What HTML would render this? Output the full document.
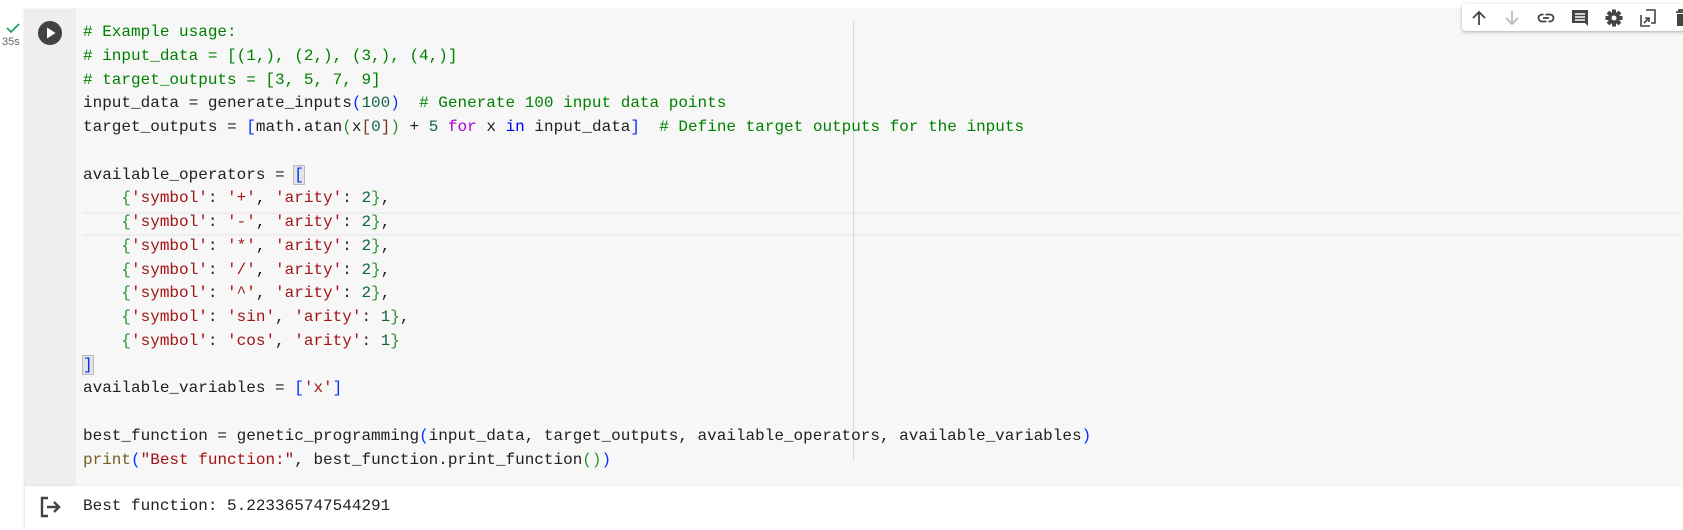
<!DOCTYPE html>
<html><head><meta charset="utf-8">
<style>
html,body{margin:0;padding:0;background:#fff;width:1683px;height:530px;overflow:hidden;position:relative;font-family:"Liberation Mono",monospace}
.cell{position:absolute;left:25px;top:9px;width:1658px;height:477px;background:#f7f7f7;box-shadow:-1px 0 2px rgba(0,0,0,.12)}
.gut{position:absolute;left:25px;top:9px;width:51px;height:477px;background:#eeeeee}
.out{position:absolute;left:25px;top:486px;width:1658px;height:44px;background:#fff;box-shadow:-1px 0 2px rgba(0,0,0,.1)}
pre{position:absolute;left:83px;top:21px;margin:0;font:16px/23.75px "Liberation Mono",monospace;color:#212121;white-space:pre}
.c{color:#008000}.n{color:#116644}.s{color:#a31515}.k{color:#af00db}.b{color:#0000ff}
.b1{color:#0431fa}.b2{color:#319331}.b3{color:#7b3814}.f{color:#795e26}
.hl{position:absolute;left:83px;top:212px;width:1600px;height:20px;border-top:2px solid #eeeeee;border-bottom:2px solid #eeeeee}
.ruler{position:absolute;left:853px;top:21px;width:1px;height:440px;background:#d8d8d8}
.mb{outline:1px solid #bbb;background:#e4e4e4}
.tb{position:absolute;left:1462px;top:4px;width:240px;height:27px;background:#fff;border-radius:3px;box-shadow:0 1px 3px rgba(0,0,0,.3)}
.tb svg{position:absolute;top:5px}
</style></head><body>
<div class="cell"></div><div class="gut"></div>
<div class="hl"></div>
<div class="ruler"></div>
<svg style="position:absolute;left:5px;top:22px" width="16" height="12" viewBox="0 0 16 12"><path d="M2 6 L6 10 L14 2" fill="none" stroke="#0f9d58" stroke-width="1.6"/></svg>
<div style="position:absolute;left:2px;top:36px;font:11px 'Liberation Sans',sans-serif;color:#666">35s</div>
<svg style="position:absolute;left:38px;top:21px" width="24" height="24" viewBox="0 0 24 24"><circle cx="12" cy="12" r="12" fill="#424242"/><path d="M9 6.5 L17.5 12 L9 17.5Z" fill="#fff"/></svg>
<pre><span class="c"># Example usage:</span>
<span class="c"># input_data = [(1,), (2,), (3,), (4,)]</span>
<span class="c"># target_outputs = [3, 5, 7, 9]</span>
input_data = generate_inputs<span class="b1">(</span><span class="n">100</span><span class="b1">)</span>  <span class="c"># Generate 100 input data points</span>
target_outputs = <span class="b1">[</span>math.atan<span class="b2">(</span>x<span class="b3">[</span><span class="n">0</span><span class="b3">]</span><span class="b2">)</span> + <span class="n">5</span> <span class="k">for</span> x <span class="b">in</span> input_data<span class="b1">]</span>  <span class="c"># Define target outputs for the inputs</span>

available_operators = <span class="b1 mb">[</span>
    <span class="b2">{</span><span class="s">'symbol'</span>: <span class="s">'+'</span>, <span class="s">'arity'</span>: <span class="n">2</span><span class="b2">}</span>,
    <span class="b2">{</span><span class="s">'symbol'</span>: <span class="s">'-'</span>, <span class="s">'arity'</span>: <span class="n">2</span><span class="b2">}</span>,
    <span class="b2">{</span><span class="s">'symbol'</span>: <span class="s">'*'</span>, <span class="s">'arity'</span>: <span class="n">2</span><span class="b2">}</span>,
    <span class="b2">{</span><span class="s">'symbol'</span>: <span class="s">'/'</span>, <span class="s">'arity'</span>: <span class="n">2</span><span class="b2">}</span>,
    <span class="b2">{</span><span class="s">'symbol'</span>: <span class="s">'^'</span>, <span class="s">'arity'</span>: <span class="n">2</span><span class="b2">}</span>,
    <span class="b2">{</span><span class="s">'symbol'</span>: <span class="s">'sin'</span>, <span class="s">'arity'</span>: <span class="n">1</span><span class="b2">}</span>,
    <span class="b2">{</span><span class="s">'symbol'</span>: <span class="s">'cos'</span>, <span class="s">'arity'</span>: <span class="n">1</span><span class="b2">}</span>
<span class="b1 mb">]</span>
available_variables = <span class="b1">[</span><span class="s">'x'</span><span class="b1">]</span>

best_function = genetic_programming<span class="b1">(</span>input_data, target_outputs, available_operators, available_variables<span class="b1">)</span>
<span class="f">print</span><span class="b1">(</span><span class="s">"Best function:"</span>, best_function.print_function<span class="b2">()</span><span class="b1">)</span></pre>
<div class="out"></div>
<svg style="position:absolute;left:39px;top:496px" width="24" height="22" viewBox="0 0 24 22"><path d="M8 2 H3 V20 H8 M8 2 H9 M8 20 H9" fill="none" stroke="#444" stroke-width="2.4"/><path d="M8 11 H20 M15 6 L20 11 L15 16" fill="none" stroke="#444" stroke-width="2.4"/></svg>
<div style="position:absolute;left:83px;top:495px;font:16px/23.75px 'Liberation Mono',monospace;color:#212121;white-space:pre">Best function: 5.223365747544291</div>
<div class="tb">
<svg style="left:8px" width="18" height="18" viewBox="0 0 18 18"><path d="M9 16 V3 M3 9 L9 3 L15 9" fill="none" stroke="#444" stroke-width="1.8"/></svg>
<svg style="left:41px" width="18" height="18" viewBox="0 0 18 18"><path d="M9 2 V15 M3 9 L9 15 L15 9" fill="none" stroke="#bbb" stroke-width="1.8"/></svg>
<svg style="left:75px" width="18" height="18" viewBox="0 0 18 18"><rect x="1.5" y="5.5" width="15" height="7" rx="3.5" fill="none" stroke="#444" stroke-width="1.8"/><path d="M6 9 H12" stroke="#444" stroke-width="1.8"/><path d="M7.5 4.5 V6.5 M10.5 11.5 V13.5" stroke="#fff" stroke-width="2"/></svg>
<svg style="left:109px" width="18" height="18" viewBox="0 0 18 18"><path d="M1 1 H17 V17 L14 14 H1Z" fill="#444"/><path d="M4 5 H14 M4 8 H14 M4 11 H14" stroke="#fff" stroke-width="1.5"/></svg>
<svg style="left:143px" width="18" height="18" viewBox="0 0 18 18"><g fill="#444"><circle cx="9" cy="9" r="6"/><rect x="7" y="0.5" width="4" height="17"/><rect x="0.5" y="7" width="17" height="4"/><rect x="7" y="0.5" width="4" height="17" transform="rotate(45 9 9)"/><rect x="7" y="0.5" width="4" height="17" transform="rotate(-45 9 9)"/></g><circle cx="9" cy="9" r="2.5" fill="#fff"/></svg>
<svg style="left:177px" width="18" height="18" viewBox="0 0 18 18"><path d="M7 1 H16 V14 H12" fill="none" stroke="#444" stroke-width="1.6"/><path d="M2 6 V17 H11" fill="none" stroke="#444" stroke-width="1.6"/><path d="M5 14 L10 9 M6 9 H10 V13" fill="none" stroke="#444" stroke-width="1.6"/></svg>
<svg style="left:211px" width="18" height="18" viewBox="0 0 18 18"><path d="M3 3 H15 M6 3 V1 H12 V3" stroke="#444" stroke-width="1.8" fill="none"/><path d="M4 5 H14 V17 H4Z" fill="#444"/></svg>
</div>
</body></html>
